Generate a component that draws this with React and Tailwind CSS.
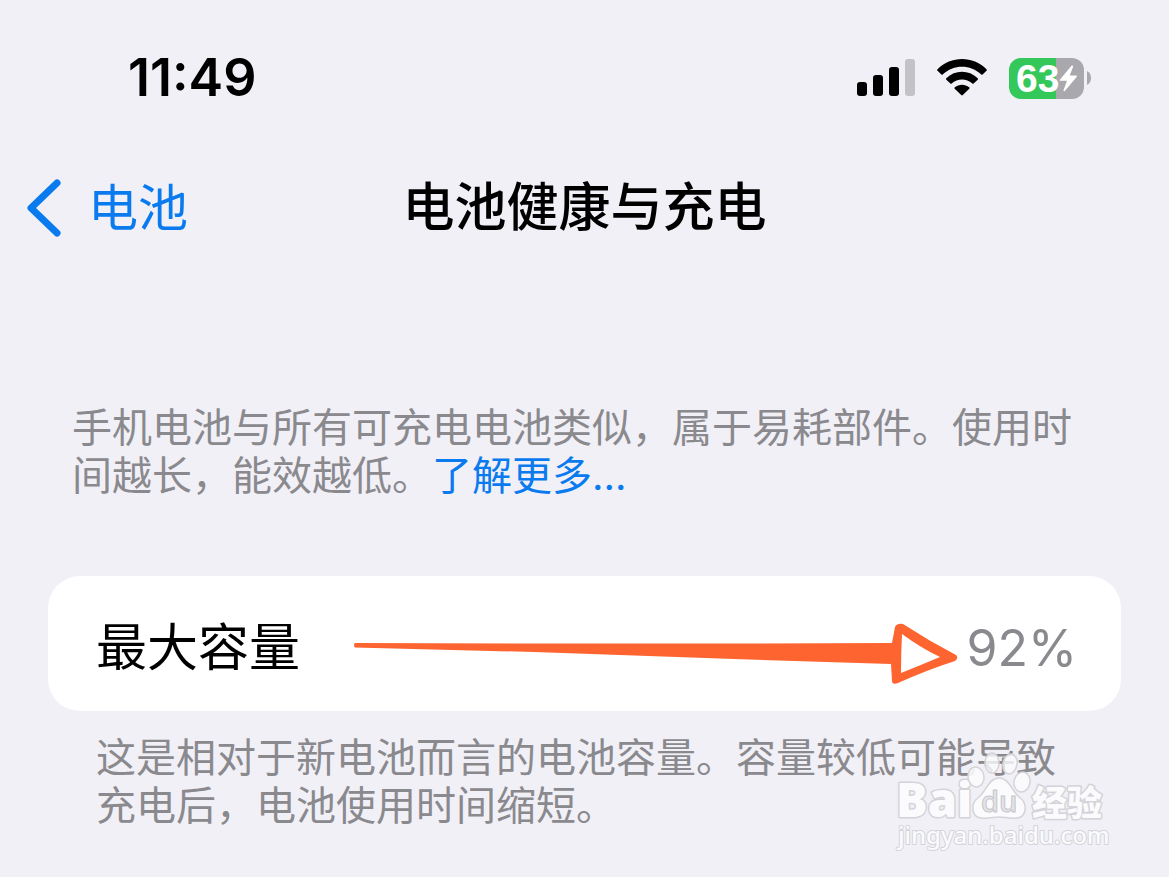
import React from "react";

function SignalIcon() {
  return (
    <svg width="58" height="38" viewBox="0 0 58 38" role="img" aria-label="信号">
      <rect x="0" y="23" width="10" height="14" rx="3" />
      <rect x="16" y="16" width="10" height="21" rx="3" />
      <rect x="32" y="8" width="10" height="29" rx="3" />
      <rect x="48" y="0" width="10" height="37" rx="3" fill="#c3c2c7" />
    </svg>
  );
}

function WifiIcon() {
  return (
    <svg width="50" height="38" viewBox="0 0 50 38" role="img" aria-label="无线局域网">
      <path d="M0.5 10.2C14-3.4 36-3.4 49.5 10.2Q50.3 11 49.5 11.8L45.6 15.6Q45 16.1 44.3 15.5C33.5 5 16.5 5 5.7 15.5Q5 16.1 4.4 15.6L.5 11.8Q-.3 11 .5 10.2Z" />
      <path d="M9.3 19.2C18 10.6 32 10.6 40.7 19.2Q41.4 20 40.7 20.7L36.6 24.6Q36 25.1 35.3 24.5C29.5 19 20.5 19 14.7 24.5Q14 25.1 13.4 24.6L9.3 20.7Q8.6 20 9.3 19.2Z" />
      <path d="M17.8 28.2C22 24.8 28 24.8 32.2 28.2Q33 29 32.3 29.7L25.8 36.1Q25 36.9 24.2 36.1L17.7 29.7Q17 29 17.8 28.2Z" />
    </svg>
  );
}

function Battery() {
  return (
    <div className="flex items-center gap-[3px]">
      <div className="flex h-[41px] w-[75px] items-center rounded-[12px] bg-[linear-gradient(90deg,#34c759_63%,#a9a8ad_63%)] pl-[7px]">
        <span className="font-['Liberation_Sans',sans-serif] text-[39px] font-bold leading-[41px] text-white">63</span>
        <svg className="shrink-0" width="19" height="27" viewBox="0 0 19 27" fill="#fff" aria-hidden="true">
          <path d="M12.5 .7L1 14.5Q.2 15.8 1.7 15.8H8L4.6 25Q4.3 26.7 5.8 25.9L17.6 12Q18.5 10.6 16.9 10.6H10.7L14 1.9Q14.2-.3 12.5 .7Z" />
        </svg>
      </div>
      <svg width="4" height="14" viewBox="0 0 4 14" fill="#a9a8ad" aria-hidden="true">
        <path d="M0 0Q4 2 4 7T0 14Z" />
      </svg>
    </div>
  );
}

function Arrow() {
  return (
    <svg
      className="pointer-events-none absolute right-[163px] top-[47px]"
      width="604"
      height="62"
      viewBox="0 0 604 62"
      aria-hidden="true"
    >
      <path
        fill="#fe6430"
        fillRule="evenodd"
        d="M1 20L180 20.5L380 20.5L538 20L541 4Q543 0 549 1Q575 18 602 32Q605 35 601 38Q573 47 544 60Q538 62 538 58L537 41L380 36L180 29L1 24.500Q-1 22 1 20ZM548 11Q547 31 547 50Q567 42 586 34Q567 25 548 11Z"
      />
    </svg>
  );
}

function Watermark() {
  return (
    <svg
      className="pointer-events-none absolute right-[60px] top-[14px]"
      width="214"
      height="110"
      viewBox="0 -10 214 110"
      fill="#fbfbfd"
      stroke="#d3d3d8"
      aria-hidden="true"
    >
      <g strokeWidth="3" strokeLinejoin="round">
        <text x="1" y="59" fontSize="47" fontWeight="800" fontFamily="Open Sans, sans-serif" paintOrder="stroke">Bai</text>
        <text x="137" y="58" fontSize="35" fontWeight="900" fontFamily="Noto Sans CJK SC, sans-serif" paintOrder="stroke">经验</text>
        <text x="3" y="86" fontSize="24" fontWeight="500" strokeWidth="2" fontFamily="Noto Sans, sans-serif" paintOrder="stroke">jingyan.baidu.com</text>
      </g>
      <g strokeWidth="1.5">
        <ellipse cx="81" cy="19" rx="8" ry="10" transform="rotate(-8 81 19)" fillOpacity=".9" />
        <ellipse cx="97" cy="5" rx="7" ry="10" fillOpacity=".8" />
        <ellipse cx="115" cy="6" rx="7" ry="10" transform="rotate(12 115 6)" fillOpacity=".8" />
        <ellipse cx="127" cy="24" rx="8" ry="10" transform="rotate(12 127 24)" fillOpacity=".9" />
        <path d="M104 20C94 20 91 33 84 39C75 45 76 59 86 60C94 61 98 59 104 59S114 61 122 60C132 59 133 45 124 39C117 33 114 20 104 20Z" />
      </g>
      <text x="86" y="54" fontSize="29" fontWeight="600" fill="#e4e4e8" stroke="#c6c6ca" strokeWidth="1" fontFamily="Open Sans, sans-serif">du</text>
    </svg>
  );
}

export default function App() {
  return (
    <div className="min-h-screen overflow-hidden bg-[#f1f0f6] pb-12 font-[Inter,'Noto_Sans_CJK_SC',sans-serif] text-black">
      <header>
        <div className="flex h-[156px] items-center justify-between pl-32 pr-[78px]">
          <time className="text-[52px] font-semibold leading-none">11:49</time>
          <div className="flex items-center gap-[22px]">
            <SignalIcon />
            <WifiIcon />
            <Battery />
          </div>
        </div>
        <nav className="grid h-[104px] grid-cols-[1fr_auto_1fr] items-center">
          <a href="#battery" className="flex items-center gap-[27px] pl-[26px] text-[50px] leading-none text-[#0a7aef]">
            <svg width="35" height="58" viewBox="0 0 35 58" fill="none" stroke="#0a7aef" strokeWidth="7" strokeLinecap="round" strokeLinejoin="round" aria-hidden="true">
              <path d="M31 4L5 29L31 54" />
            </svg>
            电池
          </a>
          <h1 className="text-[52px] font-medium leading-none">电池健康与充电</h1>
        </nav>
      </header>

      <main className="mt-36 px-12">
        <p className="px-6 text-[40px] leading-[48px] text-[#8a898e]">
          手机电池与所有可充电电池类似，属于易耗部件。使用时间越长，能效越低。
          <a href="#more" className="text-[#0a7aef]">了解更多...</a>
        </p>

        <section className="relative mt-[76px] flex h-[135px] items-center justify-between rounded-[32px] bg-white pl-12 pr-11 pt-2">
          <h2 className="text-[51px] leading-none">最大容量</h2>
          <span className="text-[50px] leading-none text-[#8a898e]">92%</span>
          <Arrow />
        </section>

        <div className="relative -mx-12 mt-[23px] px-24">
          <p className="text-[40px] leading-[48px] text-[#8a898e]">
            这是相对于新电池而言的电池容量。容量较低可能导致充电后，电池使用时间缩短。
          </p>
          <Watermark />
        </div>
      </main>
    </div>
  );
}
